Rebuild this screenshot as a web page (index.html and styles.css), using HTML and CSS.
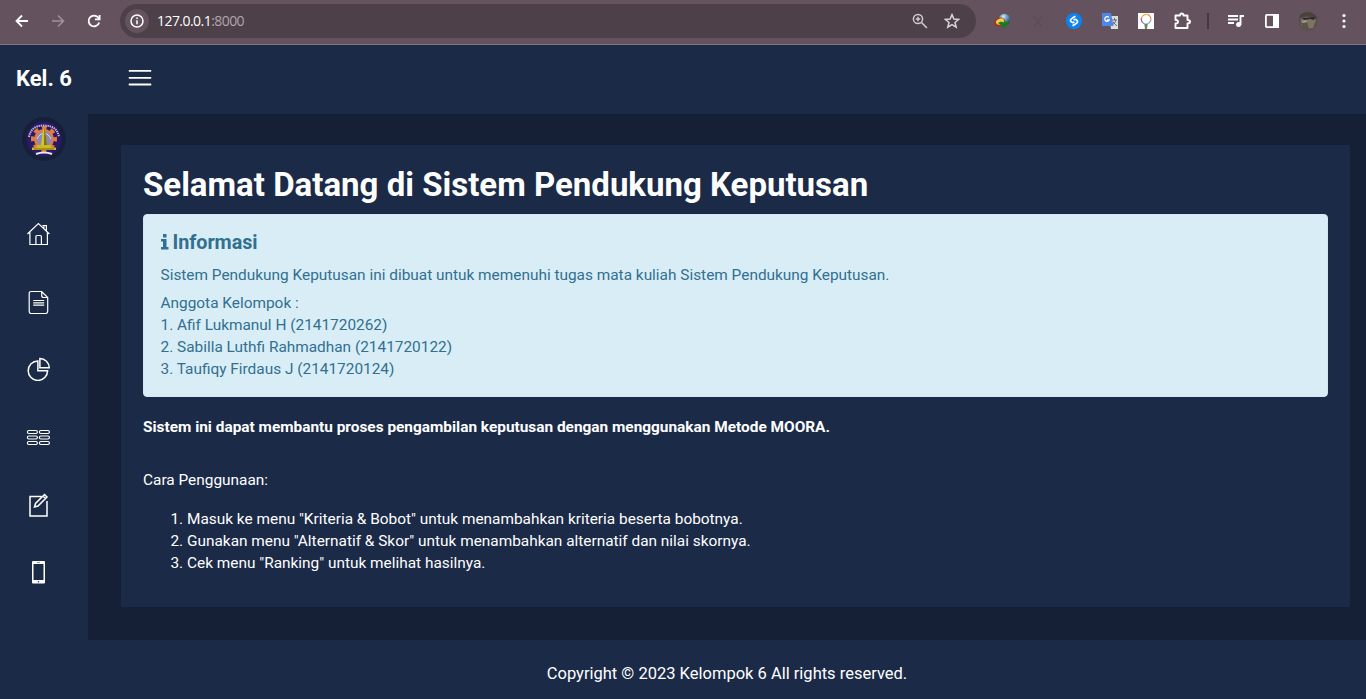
FILE: index.html
```html
<!DOCTYPE html>
<html lang="id">
<head>
<meta charset="utf-8">
<title>Sistem Pendukung Keputusan</title>
<link rel="stylesheet" href="styles.css">
</head>
<body>
<div class="browser">
  <svg class="ic nav-back" width="16" height="16" viewBox="0 0 16 16" fill="none" stroke="#fff" stroke-width="1.8"><path d="M14 8H3M8 2.5L2.5 8L8 13.5"/></svg>
  <svg class="ic nav-next" width="16" height="16" viewBox="0 0 16 16" fill="none" stroke="#9f929c" stroke-width="1.6"><path d="M2 8H13M8 2.5L13.5 8L8 13.5"/></svg>
  <svg class="ic nav-load" width="16" height="16" viewBox="0 0 16 16" fill="none" stroke="#fff" stroke-width="1.8"><path d="M13.2 9.5A5.4 5.4 0 1 1 12.2 4.5L13.5 6M13.6 2V6.4H9"/></svg>
  <div class="address">
    <span class="site-info"><svg width="14" height="14" viewBox="0 0 14 14"><circle cx="7" cy="7" r="6" fill="none" stroke="#fff" stroke-width="1.5"/><path d="M7 6.3V10.3M7 3.6V5.1" stroke="#fff" stroke-width="1.5"/></svg></span>
    <span class="url">127.0.0.1<span class="port">:8000</span></span>
    <svg class="magnify" width="16" height="16" viewBox="0 0 16 16" fill="none" stroke="#d0c9ce" stroke-width="1.5"><circle cx="6" cy="6" r="4.6"/><path d="M9.5 9.5L15 15M3.8 6H8.2M6 3.8V8.2"/></svg>
    <svg class="star" width="16" height="16" viewBox="0 0 16 16" fill="none" stroke="#d9d2d7" stroke-width="1.5"><path d="M8 1.6L9.9 6L14.7 6.4L11 9.5L12.2 14.2L8 11.7L3.8 14.2L5 9.5L1.3 6.4L6.1 6Z"/></svg>
  </div>
  <div class="extensions">
    <svg width="18" height="16" viewBox="0 0 18 16"><defs><radialGradient id="globe" cx=".4" cy=".25" r=".8"><stop offset="0" stop-color="#dbe8f2"/><stop offset=".4" stop-color="#6b9bc4"/><stop offset="1" stop-color="#173c63"/></radialGradient></defs><circle cx="11.500" cy="6.500" r="5.700" fill="url(#globe)"/><ellipse cx="6.500" cy="9" rx="5.600" ry="4.300" transform="rotate(-20 6.500 9)" fill="#a53322"/><ellipse cx="7" cy="8.500" rx="4.200" ry="2.800" transform="rotate(-25 7 8.500)" fill="#ecd44a"/><path d="M4.500 10L8.500 8.500L11 10L17 7.500L15 12L12.500 12.500L13 15L8 13L9 12Z" fill="#0d8118"/></svg>
    <svg width="18" height="16" viewBox="0 0 18 16"><path d="M5 3L13 14M13 3L5 14" stroke="#5b5057" stroke-width="1.6"/></svg>
    <svg width="18" height="16" viewBox="0 0 18 16"><circle cx="9" cy="8" r="8" fill="#0b84f3"/><path d="M10.500 3.300L7.400 5.100Q4.300 7.100 6.100 8.700T9.400 8.900M7.500 12.700L10.600 10.900Q13.700 8.900 11.900 7.300T8.600 7.100" fill="none" stroke="#fff" stroke-width="1.700"/></svg>
    <svg width="18" height="18" viewBox="0 0 18 18"><path d="M8 4H17V17H10Z" fill="#dcdcdc"/><path d="M11 8H16M13.500 6V8M15 8Q14 12 11 13M12 10L16 14" stroke="#686b74" fill="none"/><path d="M1 1H10L12.500 14H1Z" fill="#4f86e8"/><path d="M7.900 5.500A2.300 2.300 0 1 0 8.200 8H6" fill="none" stroke="#fff" stroke-width="1.300"/></svg>
    <svg width="18" height="16" viewBox="0 0 18 16"><path fill="#fff" d="M1 0H17V16H1Z"/><g fill="none" stroke-width="1.300"><path d="M7 10.500A5 5 0 0 1 4.500 5" stroke="#a25bc0"/><path d="M4.500 5A5 5 0 0 1 11 1.700" stroke="#e9b342"/><path d="M11 1.700A5 5 0 0 1 13.500 8" stroke="#e08a62"/><path d="M13.500 8A5 5 0 0 1 7 10.500" stroke="#55b8cd"/></g><path d="M7.300 11H10.700L10 16H8Z" fill="#6c8460"/></svg>
    <svg width="18" height="18" viewBox="0 0 18 18" fill="none" stroke="#fff" stroke-width="1.900" stroke-linejoin="round"><path d="M2.500 3.500H7Q7 1.500 8.700 1.500T10.500 3.500H14.500V8Q17 8 17 9.700T14.500 11.500V16H2.500V11.500Q5 11.500 5 9.700T2.500 8Z"/></svg>
  </div>
  <span class="divider"></span>
  <div class="tools">
    <svg width="18" height="16" viewBox="0 0 18 16"><path d="M1 3H11M1 6.500H11M1 10H7M13.500 12V3H17" fill="none" stroke="#fff" stroke-width="1.900"/><circle cx="11.600" cy="11.500" r="2.500" fill="#fff"/></svg>
    <svg width="18" height="16" viewBox="0 0 18 16"><rect x="2.900" y="1.900" width="12.200" height="12.200" rx="1" fill="none" stroke="#fff" stroke-width="1.800"/><path fill="#fff" d="M10 1H16V15H10Z"/></svg>
    <svg width="20" height="20" viewBox="0 0 20 20"><defs><clipPath id="face"><circle cx="10" cy="10" r="9.700"/></clipPath></defs><g clip-path="url(#face)"><path fill="#5c4f4b" d="M0 0H20V20H0Z"/><path fill="#7d7266" d="M3 8Q10 3 18 9L15 17L7 18L3 14Z"/><path d="M0 5Q10 -3 20 6V8Q10 3 2 7Z" fill="#4a423b"/><path d="M4 7L17 6L16 9L12 8L6 9Z" fill="#282928"/><path d="M3 12L9 11L11 18L6 20Z" fill="#5a5348"/><path d="M4 10L8 9L9 11L5 12Z" fill="#a69a88"/></g></svg>
    <svg width="18" height="16" viewBox="0 0 18 16" fill="#fff"><circle cx="9" cy="2.500" r="1.600"/><circle cx="9" cy="8" r="1.600"/><circle cx="9" cy="13.500" r="1.600"/></svg>
  </div>
</div>
<div class="app">
  <aside class="sidebar">
    <div class="brand">Kel. 6</div>
    <div class="avatar">
      <svg width="44" height="44" viewBox="0 0 44 44"><circle cx="22" cy="22" r="22" fill="#172039"/><circle cx="22" cy="22" r="17.500" fill="#291967"/><circle cx="22" cy="22" r="11" fill="none" stroke="#e37b3d" stroke-width="4" stroke-dasharray="4.640 4" stroke-dashoffset="2.320"/><circle cx="22" cy="22" r="10" fill="#df7d46"/><circle cx="22" cy="22" r="7.700" fill="#8d88b6"/><path d="M15 22Q18 16 21 17V28M29 22Q26 16 23 17V28" fill="none" stroke="#ded9e5"/><path d="M21 12H23L25 28H19Z" fill="#d5c51c"/><path d="M22.300 12H23L25 28H22Z" fill="#78721d"/><path d="M15 28H29V30.500H34V33H10V30.500H15Z" fill="#cabc21"/><path d="M12 32H32" stroke="#786817"/><path d="M7 20Q9 8.500 22 8.500T37 20" fill="none" stroke="#c3bbd9" stroke-width="2" stroke-dasharray="1.400 .8"/><path d="M14 37Q22 34 30 37" fill="none" stroke="#eee9e6" stroke-width="2"/></svg>
    </div>
    <nav class="menu">
      <svg width="24" height="24" viewBox="-.4 0 24 24"><path d="M1 12L12 1.500L23 12M3.500 10V22.500H21V10M9.500 22.500V14.500Q9.500 13.500 10.500 13.500H14Q15 13.500 15 14.500V22.500M16 3.500H20V8.500M17.500 3.500V6"/></svg>
      <svg width="24" height="24" viewBox="-.2 0 24 24"><path d="M5 1.500H15.500L21.500 7.500V21Q21.500 23.500 19.500 23.500H5Q3 23.500 3 21V3.500Q3 1.500 5 1.500ZM15.500 1.500V5.500Q15.500 7.500 17.500 7.500H21.500M7 10.500H18M7 12.800H18M7 15.100H18"/></svg>
      <svg width="24" height="24" viewBox="-.4 0 24 24" class="strong"><path d="M11.500 4A9.700 9.700 0 1 0 21.200 13.700H11.500ZM13.500 1.500V10.800H22.800A9.300 9.300 0 0 0 13.500 1.500Z"/></svg>
      <svg width="24" height="24" viewBox="-.4 0 24 24"><g><rect x="1" y="5.500" width="10" height="3" rx="1.500"/><rect x="13" y="5.500" width="10" height="3" rx="1.500"/><rect x="1" y="11" width="10" height="3" rx="1.500"/><rect x="13" y="11" width="10" height="3" rx="1.500"/><rect x="1" y="16.500" width="10" height="3" rx="1.500"/><rect x="13" y="16.500" width="10" height="3" rx="1.500"/></g></svg>
      <svg width="24" height="24" viewBox="-.5 0 24 24" class="strong"><path d="M15 3.500H3.500V23H20.500V8M8 14L9 10.500L18 1.500L20.500 4L11.500 13ZM16.500 3L19 5.500"/></svg>
      <svg width="24" height="24" viewBox="0 0 24 24"><path fill="#fff" stroke="none" fill-rule="evenodd" d="M7 1H18Q19 1 19 2V22.500Q19 23.500 18 23.500H7Q6 23.500 6 22.500V2Q6 1 7 1ZM7.500 4V20H17.500V4Z"/><circle cx="12.500" cy="21.700" r=".7" fill="#1b2a47" stroke="none"/><path d="M11 2.500H14" stroke="#78849b" stroke-width=".8"/></svg>
    </nav>
  </aside>
  <div class="main">
    <header class="topbar"><svg width="24" height="18" viewBox="0 0 24 18"><path d="M1.500 1.800H22.500M1.500 8.800H22.500M1.500 15.500H22.500" stroke="#fff" stroke-width="1.800" stroke-linecap="round"/></svg></header>
    <main class="content">
      <section class="card">
        <h1>Selamat Datang di Sistem Pendukung Keputusan</h1>
        <div class="alert">
          <h4><svg width="8" height="16" viewBox="0 0 8 16" fill="#31708f"><path d="M2 0H5.500V3.500H2ZM0 5H5.500V13H7.500V15.500H0V13H2V7.500H0Z"/></svg>Informasi</h4>
          <p class="purpose">Sistem Pendukung Keputusan ini dibuat untuk memenuhi tugas mata kuliah Sistem Pendukung Keputusan.</p>
          <p class="members">Anggota Kelompok :<br>1. Afif Lukmanul H (2141720262)<br>2. Sabilla Luthfi Rahmadhan (2141720122)<br>3. Taufiqy Firdaus J (2141720124)</p>
        </div>
        <p class="method"><span>Sistem ini dapat membantu proses pengambilan keputusan dengan menggunakan Metode MOORA.</span></p>
        <p class="usage">Cara Penggunaan:</p>
        <ol class="steps">
          <li>Masuk ke menu "Kriteria &amp; Bobot" untuk menambahkan kriteria beserta bobotnya.</li>
          <li>Gunakan menu "Alternatif &amp; Skor" untuk menambahkan alternatif dan nilai skornya.</li>
          <li>Cek menu "Ranking" untuk melihat hasilnya.</li>
        </ol>
      </section>
    </main>
    <footer class="footer">Copyright © 2023 Kelompok 6 All rights reserved.</footer>
  </div>
</div>
</body>
</html>
```

FILE: styles.css
```css
* { box-sizing: border-box; }
body { margin: 0; height: 699px; overflow: hidden; display: flex; flex-direction: column; background: #1b2a47; color: #fff; font: 400 15.4px/22px Roboto, sans-serif; }
svg { display: block; flex: none; }
.browser { height: 45px; flex: none; display: flex; align-items: center; padding: 0 13px 3px 14px; background: #64525e; border-bottom: 1px solid #82747f; }
.nav-next { margin-left: 20px; }
.nav-load { margin-left: 20px; }
.address { width: 856px; height: 34px; margin-left: 18px; border-radius: 17px; background: #4d4049; display: flex; align-items: center; padding: 0 16px 0 5px; }
.site-info { width: 24px; height: 24px; border-radius: 50%; background: #64525e; display: grid; place-items: center; }
.url { margin-left: 8px; font: 400 14px/20px "Open Sans", sans-serif; letter-spacing: -.55px; }
.port { color: #b0a5ad; }
.magnify { margin-left: auto; }
.star { margin-left: 16px; }
.extensions { display: flex; align-items: center; gap: 18px; margin-left: 17px; }
.divider { width: 2px; height: 16px; background: #45373f; margin: 0 18px 0 16px; }
.tools { display: flex; align-items: center; gap: 18px; }
.tools svg:nth-child(3) { margin: 0 -1px; }
.app { flex: 1; min-height: 0; display: flex; }
.sidebar { width: 88px; flex: none; background: #1b2a47; }
.brand { height: 68px; padding: 1px 0 0 16px; font-size: 22px; line-height: 66px; font-weight: 700; white-space: nowrap; }
.avatar { padding: 4px 0 0 22px; }
.menu { display: flex; flex-direction: column; gap: 43.700px; padding: 61.050px 0 0 26px; fill: none; stroke: #fff; stroke-width: 1.200; }
.menu .strong { stroke-width: 1.500; }
.main { flex: 1; min-width: 0; display: flex; flex-direction: column; }
.topbar { height: 69px; flex: none; display: flex; align-items: center; padding: 0 0 4px 40px; }
.content { height: 526px; flex: none; background: #151f36; padding: 31px 16px 33px 33px; }
.card { height: 462px; background: #1b2a47; padding: 22px; }
h1 { margin: 0 0 11px; font-size: 33px; line-height: 36px; font-weight: 700; white-space: nowrap; }
.alert { height: 183px; background: #d9edf7; border: 1px solid #d0e9f3; border-radius: 4px; color: #31708f; padding: 17px 16.500px; }
.alert h4 { display: flex; align-items: center; gap: 4px; margin: 0 0 10px; font-size: 19.800px; line-height: 22px; font-weight: 700; letter-spacing: -.05px; }
.alert h4 svg { margin-top: -2px; }
.alert p { margin: 0; }
.members { padding-top: 6px; }
.method { margin: 19px 0 31px; font-weight: 700; }
.usage { margin: 0 0 17px; }
.steps { margin: 0; padding-left: 44px; }
.footer { flex: 1; display: grid; place-items: center; padding-top: 8px; font-size: 16.500px; }
```
